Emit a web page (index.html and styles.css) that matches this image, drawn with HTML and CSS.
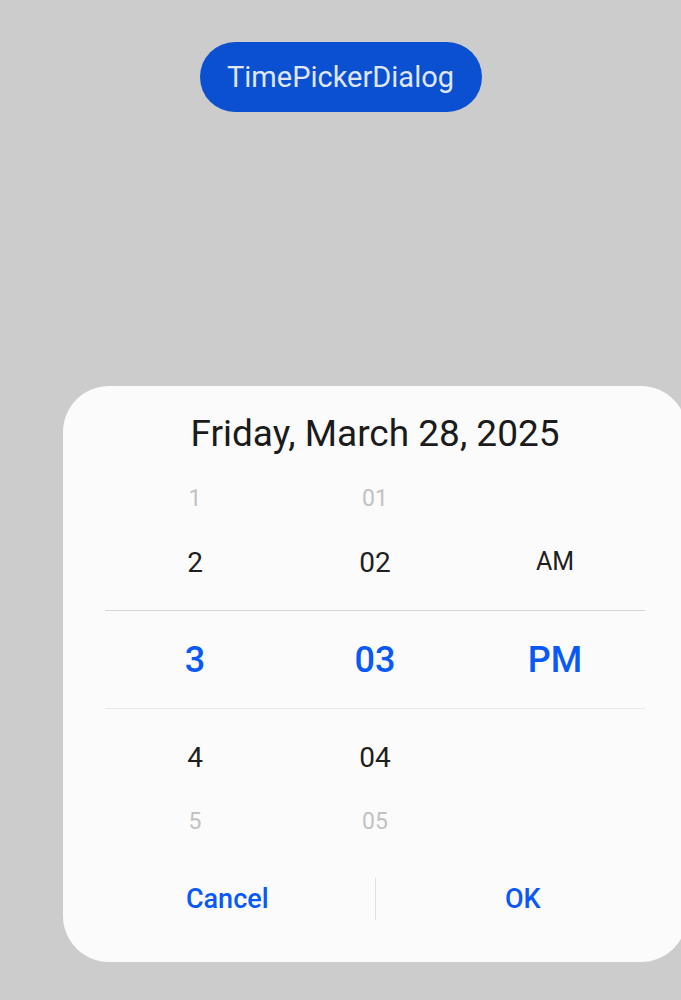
FILE: index.html
```html
<!DOCTYPE html>
<html lang="en">
<head>
	<meta charset="UTF-8">
	<title>TimePickerDialog</title>
	<link rel="stylesheet" href="styles.css">
</head>
<body>
	<div class="page">
		<button class="open-btn">TimePickerDialog</button>

		<div class="dialog">
			<div class="dialog-title">Friday, March 28, 2025</div>

			<div class="picker">
				<div class="row row-far">
					<span>1</span><span>01</span><span></span>
				</div>
				<div class="row row-near">
					<span>2</span><span>02</span><span class="ampm">AM</span>
				</div>
				<div class="row row-selected">
					<span>3</span><span>03</span><span>PM</span>
				</div>
				<div class="row row-near">
					<span>4</span><span>04</span><span></span>
				</div>
				<div class="row row-far">
					<span>5</span><span>05</span><span></span>
				</div>
			</div>

			<div class="actions">
				<button class="action">Cancel</button>
				<div class="action-divider"></div>
				<button class="action">OK</button>
			</div>
		</div>
	</div>
</body>
</html>
```

FILE: styles.css
```css
html, body {
	margin: 0;
	overflow: hidden;
}

body {
	background-color: #cccccc;
	font-family: Roboto, "Noto Sans", sans-serif;
}

.page {
	height: 1000px;
	padding-top: 42px;
	box-sizing: border-box;
}

.open-btn {
	display: block;
	margin: 0 auto;
	width: 282px;
	height: 70px;
	border: none;
	border-radius: 35px;
	background-color: #0a50d0;
	color: #dfe6f6;
	font-family: Roboto, "Noto Sans", sans-serif;
	font-size: 29px;
	padding: 0;
}

.dialog {
	margin-top: 274px;
	margin-left: 63px;
	width: 624px;
	box-sizing: border-box;
	padding: 22px 17px 35px;
	background-color: #fbfbfb;
	border-radius: 46px;
}

.dialog-title {
	height: 52px;
	line-height: 52px;
	text-align: center;
	font-size: 37px;
	color: #1b1b1b;
}

.picker {
	margin: 6px 25px 0;
}

.row {
	display: grid;
	grid-template-columns: repeat(3, 1fr);
	align-items: center;
	text-align: center;
	height: 64px;
}

.row-far {
	font-size: 23px;
	color: #c2c2c2;
}

.row-near {
	font-size: 28px;
	color: #1f1f1f;
}

.row-near .ampm {
	font-size: 25px;
	padding-bottom: 2px;
}

.row-selected {
	height: 97px;
	margin: 16px 0;
	border-top: 1px solid #d6d6d6;
	border-bottom: 1px solid #e8e8e8;
	font-size: 36px;
	font-weight: 500;
	color: #0a59f7;
}

.actions {
	display: flex;
	align-items: center;
	height: 56px;
	margin-top: 18px;
}

.action {
	flex: 1;
	border: none;
	background: none;
	padding: 0;
	height: 56px;
	font-family: Roboto, "Noto Sans", sans-serif;
	font-size: 27px;
	font-weight: 500;
	color: #0a59f7;
}

.action-divider {
	width: 1px;
	height: 42px;
	background-color: #e2e2e2;
}
```
